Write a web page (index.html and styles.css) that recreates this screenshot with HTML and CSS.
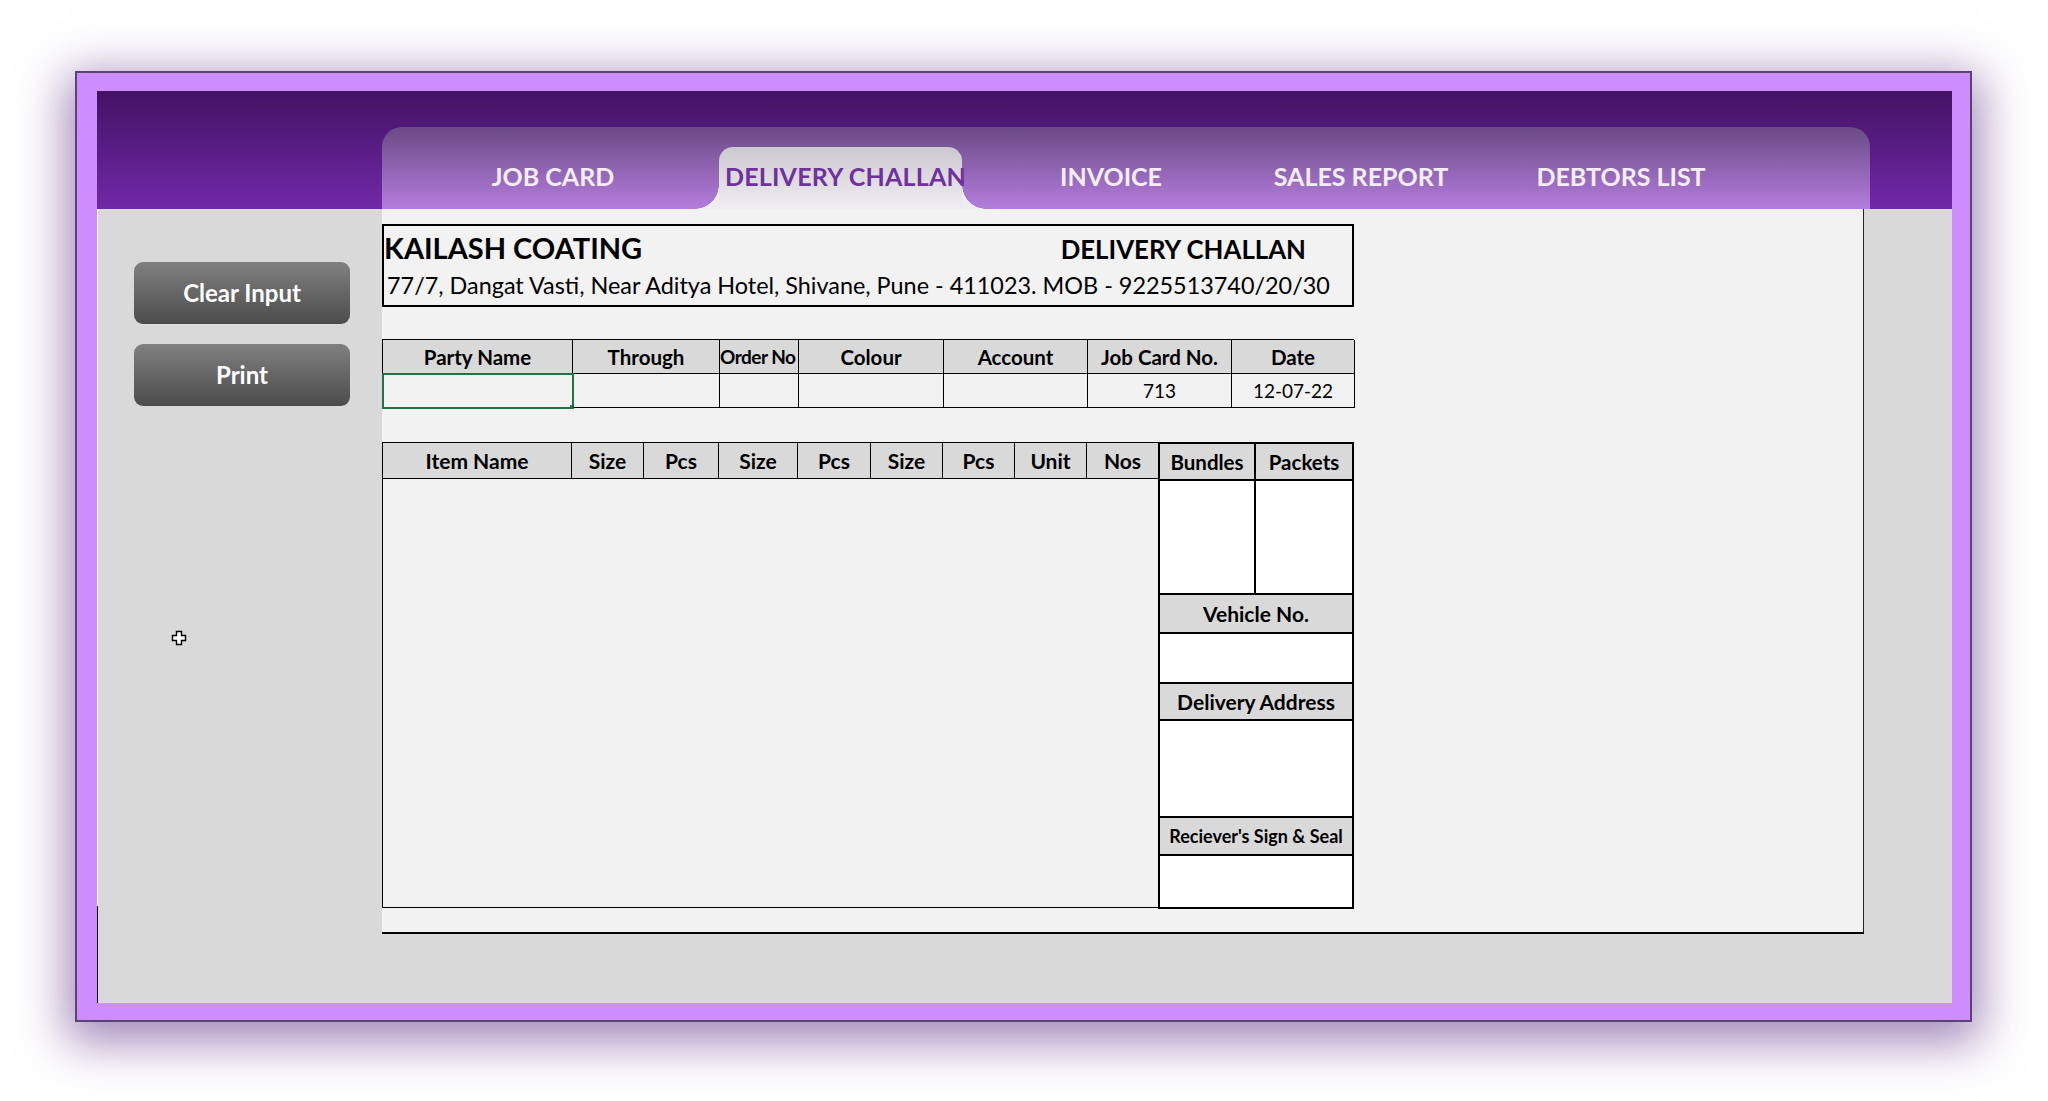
FILE: index.html
```html
<!DOCTYPE html>
<html lang="en">
<head>
<meta charset="utf-8">
<title>Delivery Challan</title>
<link rel="stylesheet" href="styles.css">
</head>
<body>
<div class="frame">
  <div class="screen">
    <header class="topbar">
      <nav class="tabs">
        <div class="tab tab-job">JOB CARD</div>
        <div class="tab tab-dc active">DELIVERY CHALLAN</div>
        <div class="tab tab-inv">INVOICE</div>
        <div class="tab tab-sales">SALES REPORT</div>
        <div class="tab tab-debt">DEBTORS LIST</div>
      </nav>
    </header>
    <main class="workspace">
      <aside class="actions">
        <button class="btn">Clear Input</button>
        <button class="btn">Print</button>
      </aside>
      <section class="sheet">
        <div class="letterhead">
          <div class="lh-row">
            <span class="company">KAILASH COATING</span>
            <span class="doc-title">DELIVERY CHALLAN</span>
          </div>
          <div class="address">77/7, Dangat Vasti, Near Aditya Hotel, Shivane, Pune - 411023. MOB - 9225513740/20/30</div>
        </div>

        <div class="params">
          <div class="ph">Party Name</div>
          <div class="ph">Through</div>
          <div class="ph ph-small">Order No</div>
          <div class="ph">Colour</div>
          <div class="ph">Account</div>
          <div class="ph">Job Card No.</div>
          <div class="ph">Date</div>
          <div class="pd selected"><span class="handle"></span></div>
          <div class="pd"></div>
          <div class="pd"></div>
          <div class="pd"></div>
          <div class="pd"></div>
          <div class="pd">713</div>
          <div class="pd">12-07-22</div>
        </div>

        <div class="items-area">
          <div class="items">
            <div class="items-head">
              <div class="ih">Item Name</div>
              <div class="ih">Size</div>
              <div class="ih">Pcs</div>
              <div class="ih">Size</div>
              <div class="ih">Pcs</div>
              <div class="ih">Size</div>
              <div class="ih">Pcs</div>
              <div class="ih">Unit</div>
              <div class="ih">Nos</div>
            </div>
            <div class="items-body"></div>
          </div>
          <div class="side">
            <div class="side-split side-head">
              <div class="sh">Bundles</div>
              <div class="sh">Packets</div>
            </div>
            <div class="side-split side-data">
              <div></div>
              <div></div>
            </div>
            <div class="sh-row sh-vehicle">Vehicle No.</div>
            <div class="sd-row sd-vehicle"></div>
            <div class="sh-row sh-addr">Delivery Address</div>
            <div class="sd-row sd-addr"></div>
            <div class="sh-row sh-sign">Reciever's Sign &amp; Seal</div>
            <div class="sd-row sd-sign"></div>
          </div>
        </div>
      </section>
      <svg class="cursor" width="16" height="16" viewBox="0 0 16 16">
        <path d="M5.5 1.5h5v4h4v5h-4v4h-5v-4h-4v-5h4z" fill="#fff" stroke="#000" stroke-width="1.4"/>
      </svg>
    </main>
  </div>
</div>
</body>
</html>
```

FILE: styles.css
```css
* { box-sizing: border-box; }

html, body {
  margin: 0;
  padding: 0;
  background: #ffffff;
}

body {
  width: 2048px;
  height: 1101px;
  overflow: hidden;
  font-family: "Lato", "Open Sans", sans-serif;
  color: #000;
}

.frame {
  margin: 71px 0 0 75px;
  width: 1897px;
  height: 951px;
  border: 2px solid #5a4570;
  background: #cd8dfe;
  padding: 18px 18px 17px 20px;
  box-shadow: 0 12px 45px 8px rgba(85, 35, 125, 0.55);
}

.screen {
  width: 1855px;
  height: 912px;
  display: flex;
  flex-direction: column;
}

/* ---------- Top bar with tabs ---------- */
.topbar {
  height: 118px;
  flex: none;
  background: linear-gradient(#421263, #7129a8);
  display: flex;
  align-items: flex-end;
  padding-left: 285px;
}

.tabs {
  width: 1488px;
  height: 82px;
  border-radius: 20px 20px 0 0;
  background: linear-gradient(#6a4a85, #b47ddd);
  display: flex;
  align-items: flex-end;
}

.tab {
  height: 62px;
  display: flex;
  align-items: center;
  justify-content: center;
  padding-bottom: 4px;
  font-weight: 700;
  font-size: 25px;
  color: #f4eefa;
  white-space: nowrap;
  position: relative;
}

.tab-job { width: 337px; padding-left: 5px; }
.tab-dc { width: 243px; }
.tab-inv { width: 298px; }
.tab-sales { width: 202px; }
.tab-debt { width: 318px; }

.tab.active {
  color: #7030a0;
  background: linear-gradient(#cbc9ce, #f0eef2);
  border-radius: 14px 14px 0 0;
  letter-spacing: 0.2px;
  justify-content: flex-start;
  padding-left: 6px;
}

.tab.active::before,
.tab.active::after {
  content: "";
  position: absolute;
  bottom: 0;
  width: 24px;
  height: 24px;
}

.tab.active::before {
  left: -24px;
  background: radial-gradient(circle at 0 0, transparent 23.5px, #efedf1 24px);
}

.tab.active::after {
  right: -24px;
  background: radial-gradient(circle at 100% 0, transparent 23.5px, #efedf1 24px);
}

/* ---------- Workspace ---------- */
.workspace {
  flex: 1;
  display: flex;
  background: #d9d9d9;
  border-left: 1px solid #ffffff;
  position: relative;
}

.workspace::before {
  content: "";
  position: absolute;
  left: -1px;
  top: 697px;
  bottom: 0;
  width: 1px;
  background: #000;
}

.actions {
  width: 284px;
  flex: none;
  padding: 53px 0 0 36px;
  display: flex;
  flex-direction: column;
  gap: 20px;
}

.btn {
  width: 216px;
  height: 62px;
  border: none;
  border-radius: 9px;
  background: linear-gradient(#808080, #4c4c4c);
  color: #ffffff;
  font-family: "Lato", "Open Sans", sans-serif;
  font-weight: 700;
  font-size: 24px;
  padding: 0 0 2px 0;
}

.cursor {
  position: absolute;
  left: 73px;
  top: 421px;
}

/* ---------- Sheet ---------- */
.sheet {
  width: 1482px;
  height: 725px;
  flex: none;
  background: #f2f2f2;
  border-right: 1px solid #222;
  border-bottom: 2px solid #000;
  padding-top: 15px;
}

.letterhead {
  width: 972px;
  height: 83px;
  border: 2px solid #000;
  padding: 0 46px 0 0;
}

.lh-row {
  display: flex;
  justify-content: space-between;
  align-items: baseline;
  height: 44px;
  padding-top: 6px;
}

.company {
  font-weight: 700;
  font-size: 29px;
  line-height: 32px;
}

.doc-title {
  font-weight: 700;
  font-size: 25.8px;
  line-height: 32px;
}

.address {
  font-size: 23.4px;
  line-height: 30px;
  padding-left: 3px;
  white-space: nowrap;
}

/* params table */
.params {
  margin-top: 32px;
  width: 972px;
  display: grid;
  grid-template-columns: 190px 147px 79px 145px 144px 144px 123px;
  grid-template-rows: 34px 34px;
  border-top: 1px solid #000;
  border-left: 1px solid #000;
}

.ph, .pd {
  border-right: 1px solid #000;
  border-bottom: 1px solid #000;
  display: flex;
  align-items: center;
  justify-content: center;
  white-space: nowrap;
  overflow: hidden;
}

.ph {
  background: #d9d9d9;
  font-weight: 700;
  font-size: 20.5px;
}

.ph-small {
  font-size: 19px;
  letter-spacing: -0.5px;
  justify-content: flex-start;
}

.pd {
  font-size: 19px;
  position: relative;
}

.pd.selected {
  outline: 2px solid #217346;
  outline-offset: -1px;
}

.handle {
  position: absolute;
  right: -3px;
  bottom: -3px;
  width: 6px;
  height: 6px;
  background: #217346;
  border: 1px solid #fff;
}

/* items area */
.items-area {
  margin-top: 34px;
  display: flex;
  height: 467px;
  width: 972px;
}

.items {
  width: 776px;
  display: flex;
  flex-direction: column;
  border-left: 1px solid #000;
  border-top: 1px solid #000;
  border-bottom: 1px solid #000;
  height: 466px;
}

.items-head {
  height: 36px;
  display: grid;
  grid-template-columns: 189px 72px 75px 79px 73px 72px 72px 72px 71px;
  background: #d9d9d9;
  border-bottom: 1px solid #000;
}

.ih {
  display: flex;
  align-items: center;
  justify-content: center;
  font-weight: 700;
  font-size: 21px;
  border-right: 1px solid #000;
  white-space: nowrap;
}

.ih:last-child { border-right: none; }

.items-body { flex: 1; }

.side {
  width: 196px;
  border: 2px solid #000;
  display: flex;
  flex-direction: column;
  background: #ffffff;
}

.side-split {
  display: grid;
  grid-template-columns: 96px 1fr;
}

.side-split > div:first-child { border-right: 2px solid #000; }

.side-head {
  height: 35px;
  background: #d9d9d9;
}

.sh {
  display: flex;
  align-items: center;
  justify-content: center;
  font-weight: 700;
  font-size: 20.5px;
}

.side-data {
  height: 114px;
  border-top: 2px solid #000;
}

.sh-row {
  border-top: 2px solid #000;
  background: #d9d9d9;
  display: flex;
  align-items: center;
  justify-content: center;
  font-weight: 700;
  font-size: 21px;
  white-space: nowrap;
}

.sd-row { border-top: 2px solid #000; }

.sh-vehicle { height: 39px; }
.sd-vehicle { height: 50px; }
.sh-addr { height: 37px; }
.sd-addr { height: 97px; }
.sh-sign { height: 38px; font-size: 18px; }
.sd-sign { flex: 1; }
```
